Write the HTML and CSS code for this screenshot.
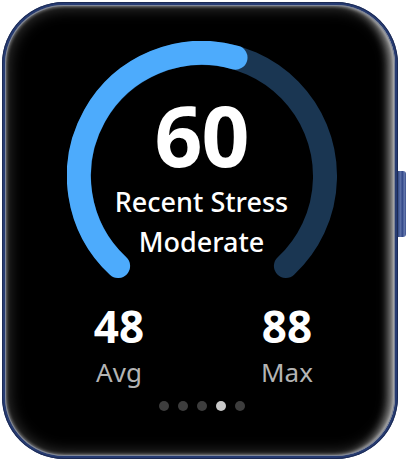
FILE: index.html
```html
<!DOCTYPE html>
<html lang="en">
<head>
<meta charset="utf-8">
<title>Recent Stress</title>
<link rel="stylesheet" href="styles.css">
</head>
<body>
<div class="watch">
  <div class="side-button"></div>
  <div class="screen">
    <div class="gauge">
      <svg class="ring" width="270" height="240" viewBox="0 0 270 240" aria-hidden="true">
        <path d="M51.1 225 A123 123 0 1 1 218.9 225" fill="none" stroke="#1a3652" stroke-width="24" stroke-linecap="round"/>
        <path d="M51.1 225 A123 123 0 0 1 168.5 16.6" fill="none" stroke="#4dabfc" stroke-width="24" stroke-linecap="round"/>
      </svg>
      <div class="readout">
        <div class="value">60</div>
        <div class="label">Recent Stress</div>
        <div class="label">Moderate</div>
      </div>
    </div>
    <div class="stats">
      <div class="stat">
        <div class="stat-value">48</div>
        <div class="stat-label">Avg</div>
      </div>
      <div class="stat">
        <div class="stat-value">88</div>
        <div class="stat-label">Max</div>
      </div>
    </div>
    <div class="dots">
      <span class="dot"></span>
      <span class="dot"></span>
      <span class="dot"></span>
      <span class="dot active"></span>
      <span class="dot"></span>
    </div>
  </div>
</div>
</body>
</html>
```

FILE: styles.css
```css
* { box-sizing: border-box; }

html, body {
  margin: 0;
  padding: 0;
  background: #ffffff;
}

body {
  width: 406px;
  height: 463px;
  overflow: hidden;
  font-family: "Noto Sans", "Open Sans", sans-serif;
  color: #ffffff;
}

.watch {
  position: relative;
  margin: 2px 0 0 2px;
  width: 396px;
  height: 457px;
  border-radius: 62px;
  background: #263b72;
  padding: 3px;
  box-shadow: inset 0 0 0 1px #1c2b55;
}

.side-button {
  position: absolute;
  right: -8px;
  top: 169px;
  width: 8px;
  height: 66px;
  border-radius: 0 3px 3px 0;
  background: linear-gradient(90deg, #2f4680 0%, #5b6fa6 30%, #34498a 55%, #6377ad 80%, #3a4f8c 100%);
}

.screen {
  width: 390px;
  height: 451px;
  border-radius: 59px;
  background: #000000;
  box-shadow:
    inset 0 0 0 1px #7d8597,
    inset 0 0 3px 2px rgba(255, 255, 255, 0.35),
    inset 0 0 16px 2px rgba(255, 255, 255, 0.26),
    inset -12px 0 10px -6px rgba(255, 255, 255, 0.55);
  display: flex;
  flex-direction: column;
  align-items: center;
  padding: 36px 0 0 3px;
}

.gauge {
  display: grid;
  justify-items: center;
}

.ring,
.readout {
  grid-area: 1 / 1;
}

.ring { display: block; }

.readout {
  padding-top: 52px;
  display: flex;
  flex-direction: column;
  align-items: center;
}

.value {
  font-size: 84px;
  line-height: 84px;
  font-weight: 700;
  letter-spacing: -1px;
}

.label {
  font-size: 27px;
  line-height: 40px;
  font-weight: 500;
}

.value + .label { margin-top: 5px; }

.stats {
  margin-top: 23px;
  display: flex;
  gap: 68px;
  padding-left: 3px;
}

.stat {
  width: 100px;
  display: flex;
  flex-direction: column;
  align-items: center;
}

.stat-value {
  font-size: 44px;
  line-height: 44px;
  font-weight: 700;
}

.stat-label {
  margin-top: 9px;
  font-size: 26px;
  line-height: 30px;
  color: #b4b4b4;
}

.dots {
  margin-top: 14px;
  display: flex;
  gap: 9px;
}

.dot {
  width: 10px;
  height: 10px;
  border-radius: 50%;
  background: #3d3d3d;
}

.dot.active { background: #c9c9c9; }
```
